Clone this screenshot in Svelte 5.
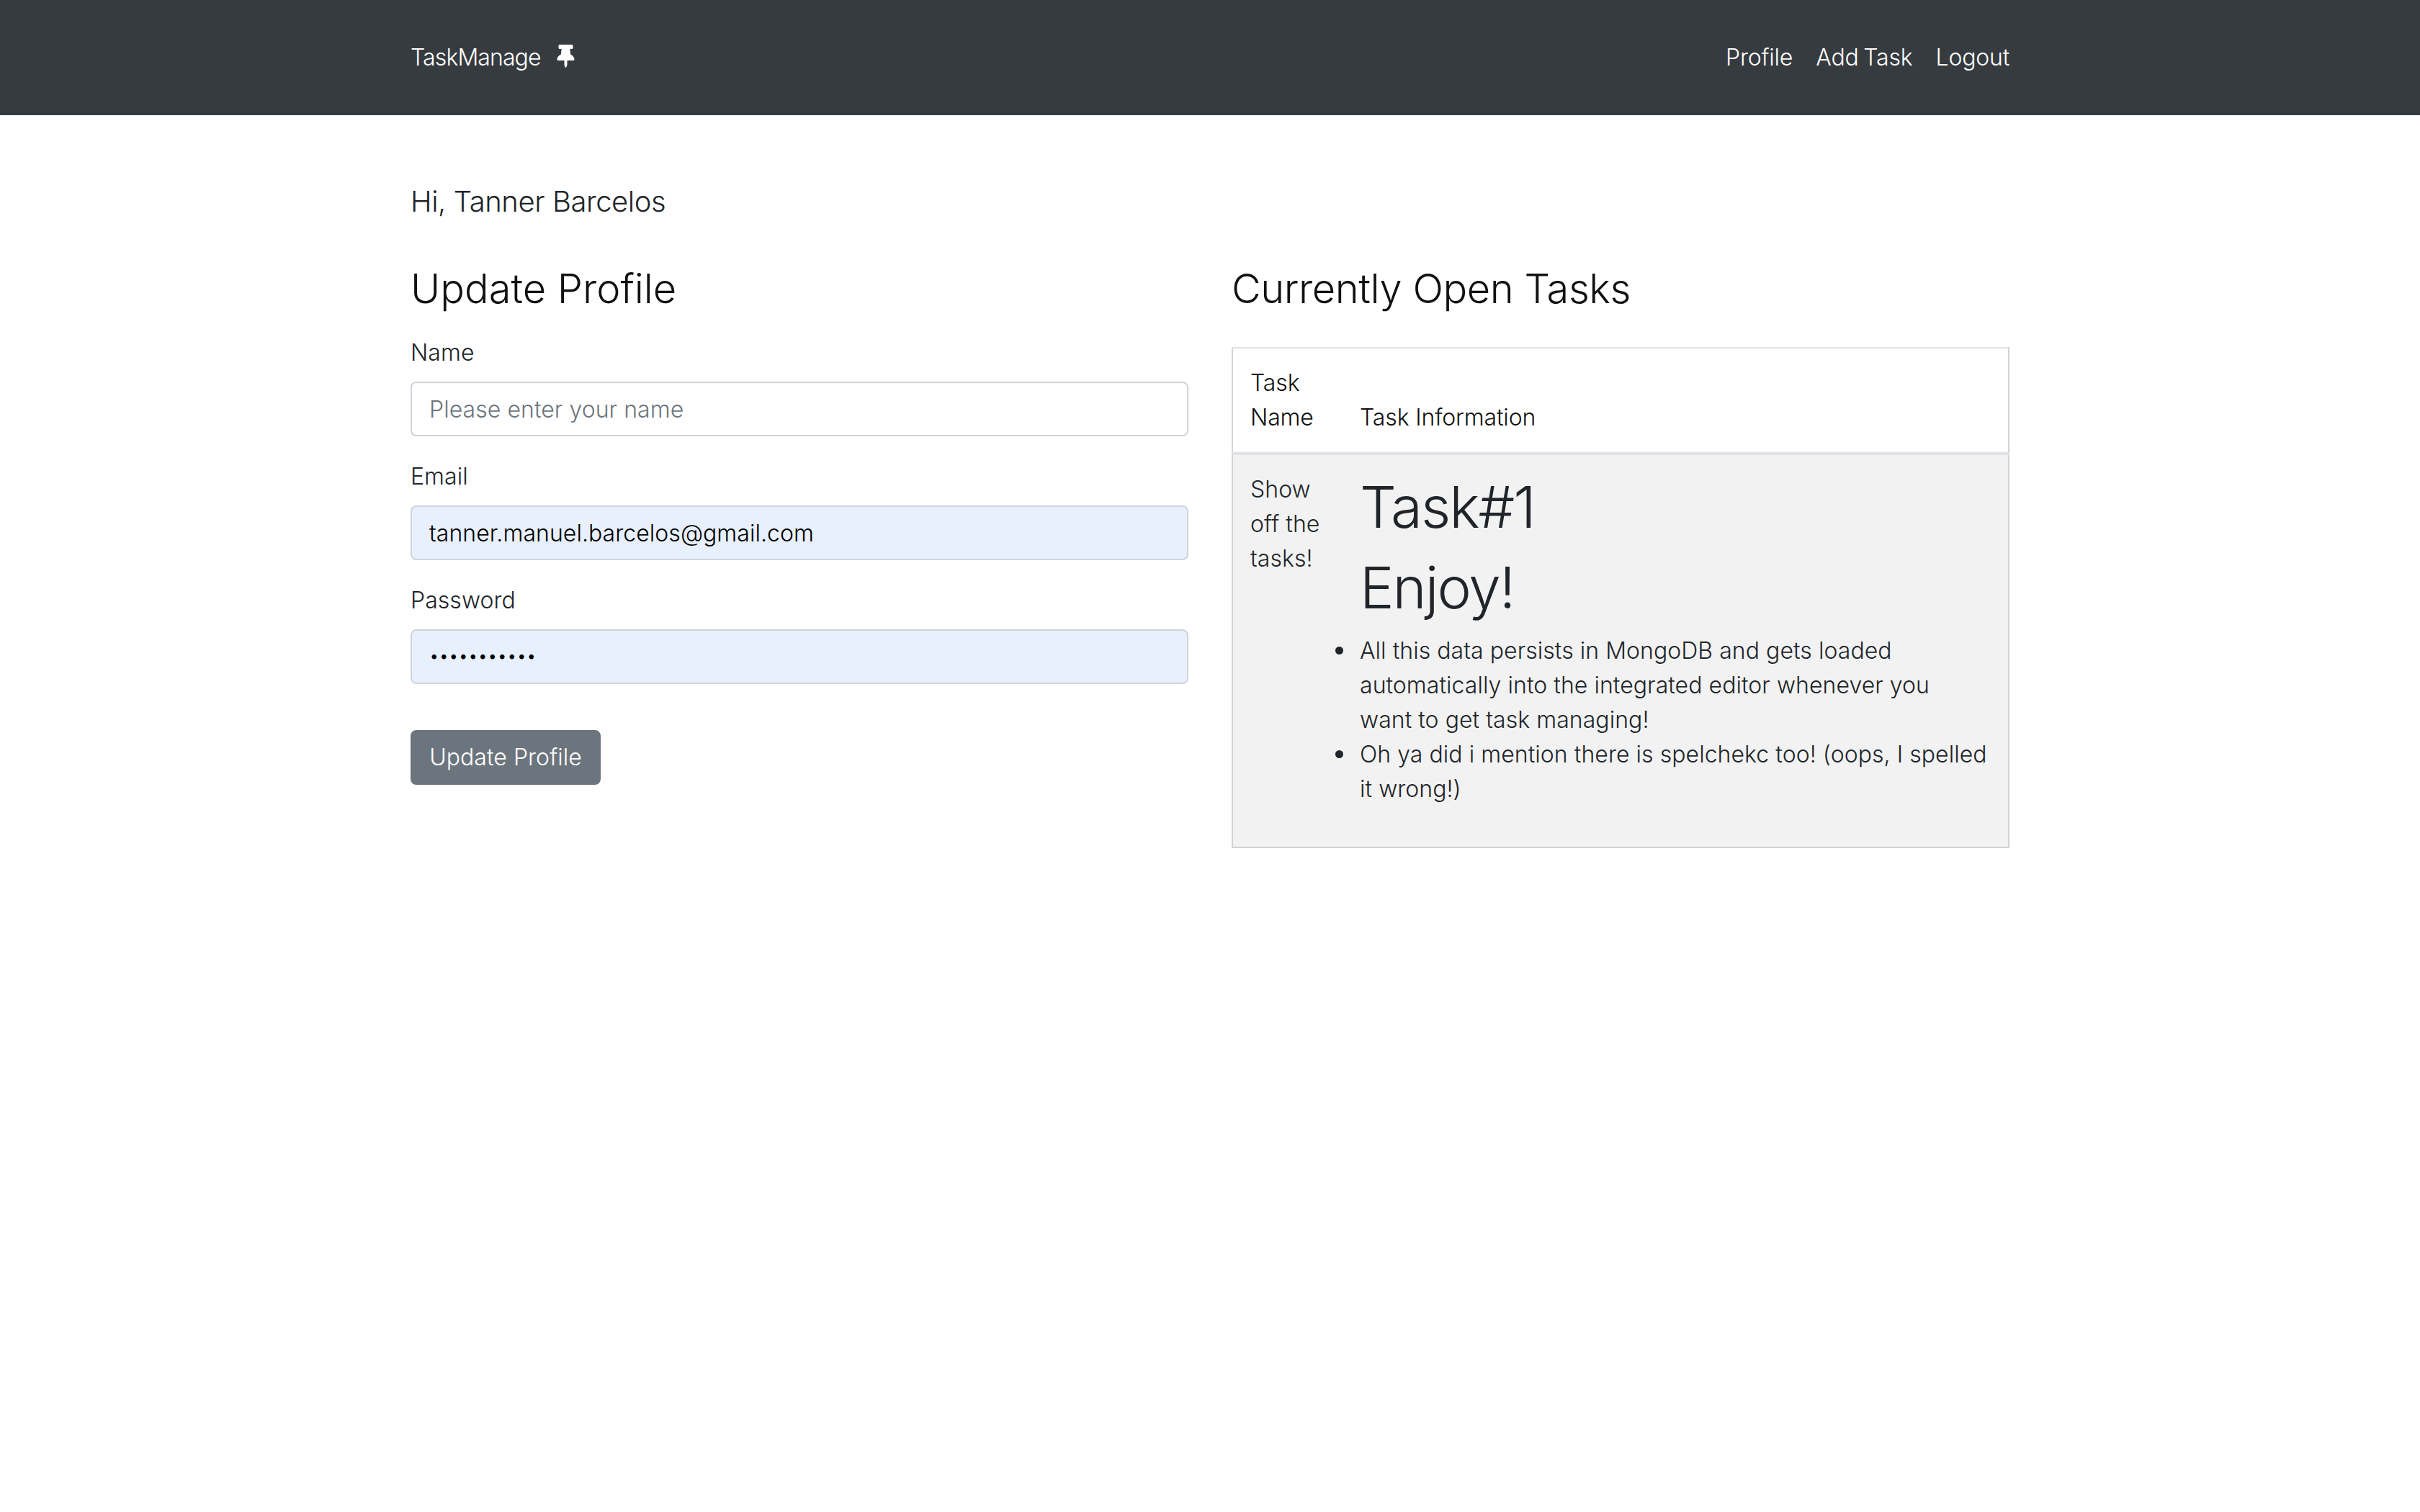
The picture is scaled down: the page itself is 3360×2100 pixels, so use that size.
<script>
  const links = ['Profile', 'Add Task', 'Logout'];
  const fields = [
    { id: 'name', label: 'Name', type: 'text', placeholder: 'Please enter your name', value: '', filled: false },
    { id: 'email', label: 'Email', type: 'email', placeholder: '', value: 'tanner.manuel.barcelos@gmail.com', filled: true },
    { id: 'password', label: 'Password', type: 'password', placeholder: '', value: 'abcdefghijk', filled: true }
  ];
</script>

<nav class="navbar">
  <div class="container nav-inner">
    <a class="brand" href="#top">TaskManage
      <svg class="pin" viewBox="0 0 384 512" aria-hidden="true"><path fill="currentColor" d="M298.028 214.267L285.793 96H328c13.255 0 24-10.745 24-24V24c0-13.255-10.745-24-24-24H56C42.745 0 32 10.745 32 24v48c0 13.255 10.745 24 24 24h42.207L85.972 214.267C37.465 236.82 0 277.261 0 328c0 13.255 10.745 24 24 24h136v104.007c0 1.242.289 2.467.845 3.578l24 48c2.941 5.882 11.364 5.893 14.311 0l24-48a8.008 8.008 0 0 0 .845-3.578V352h136c13.255 0 24-10.745 24-24-.001-51.183-37.983-91.42-85.973-113.733z"/></svg>
    </a>
    <div class="links">
      {#each links as l}<a href="#top">{l}</a>{/each}
    </div>
  </div>
</nav>

<main class="container">
  <h5>Hi, Tanner Barcelos</h5>
  <div class="row">
    <section>
      <h3>Update Profile</h3>
      <form>
        {#each fields as f}
          <div class="group">
            <label for={f.id}>{f.label}</label>
            <input id={f.id} class:filled={f.filled} class:secret={f.type === 'password'} type={f.type} placeholder={f.placeholder} value={f.value} autocomplete="off" />
          </div>
        {/each}
        <button type="button">Update Profile</button>
      </form>
    </section>
    <section>
      <h3 class="tasks-title">Currently Open Tasks</h3>
      <table>
        <thead>
          <tr><th class="first">Task Name</th><th>Task Information</th></tr>
        </thead>
        <tbody>
          <tr>
            <td class="first">Show off the tasks!</td>
            <td>
              <h1>Task#1</h1>
              <h1>Enjoy!</h1>
              <ul>
                <li>All this data persists in MongoDB and gets loaded automatically into the integrated editor whenever you<br />want to get task managing!</li>
                <li>Oh ya did i mention there is spelchekc too! (oops, I spelled it wrong!)</li>
              </ul>
            </td>
          </tr>
        </tbody>
      </table>
    </section>
  </div>
</main>

<style>
  :global(body) {
    margin: 0;
    background: #fff;
    color: #212529;
    font-family: Inter, "Liberation Sans", sans-serif;
    font-weight: 300;
    font-size: 32px;
    line-height: 48px;
    letter-spacing: 0.05px;
  }
  .container { width: 2220px; margin: 0 auto; }
  .navbar { background: #363b3f; height: 160px; display: flex; align-items: center; }
  .nav-inner { display: flex; justify-content: space-between; align-items: center; }
  .brand, .links a { color: #fff; text-decoration: none; }
  .brand { display: flex; align-items: center; gap: 22px; letter-spacing: -0.9px; }
  .pin { width: 25px; height: 32px; margin-top: -4px; }
  .links { display: flex; gap: 32px; letter-spacing: -0.2px; word-spacing: -2px; }
  main { padding-top: 96px; }
  h5 { font-size: 40px; line-height: 48px; font-weight: 300; margin: 0 0 64px; letter-spacing: -0.45px; }
  .row { display: grid; grid-template-columns: 1080px 1080px; column-gap: 60px; }
  h3 { font-size: 56px; line-height: 67px; font-weight: 350; color: #111; margin: 0 0 31px; letter-spacing: 0; }
  .tasks-title { margin-bottom: 47px; letter-spacing: -0.45px; }
  .group { margin-bottom: 32px; }
  label { display: block; margin-bottom: 16px; }
  input {
    display: block; box-sizing: border-box; width: 100%; height: 76px;
    padding: 12px 24px; border: 2px solid #ced4da; border-radius: 8px;
    background: #fff; color: #000; outline: none;
    font: inherit; letter-spacing: inherit;
  }
  input::placeholder { color: #6c757d; opacity: 1; }
  input.filled { background: #e8f0fe; }
  input.secret { font-size: 24px; letter-spacing: 0; padding-top: 10px; padding-bottom: 14px; }
  form button {
    display: block; margin-top: 64px; height: 76px; width: 264px; padding: 0;
    border: 2px solid #6c757d; border-radius: 8px; background: #6c757d; color: #fff;
    font: inherit; letter-spacing: inherit;
  }
  table { width: 100%; border-collapse: collapse; border: 2px solid #d3d3d3; border-top-color: #dee2e6; }
  th, td { padding: 24px; text-align: left; }
  th { font-weight: 350; vertical-align: bottom; border-bottom: 4px solid #dee2e6; color: #111; letter-spacing: -0.15px; }
  td { vertical-align: top; background: #f2f2f2; }
  .first { width: 104px; }
  h1 { font-size: 80px; line-height: 96px; font-weight: 300; margin: 0 0 16px; letter-spacing: -2px; }
  ul { margin: 0 0 32px; padding: 0; list-style: none; }
  li { position: relative; }
  li::before {
    content: ''; position: absolute; left: -34px; top: 18px;
    width: 11px; height: 11px; border-radius: 50%; background: #212529;
  }
</style>
